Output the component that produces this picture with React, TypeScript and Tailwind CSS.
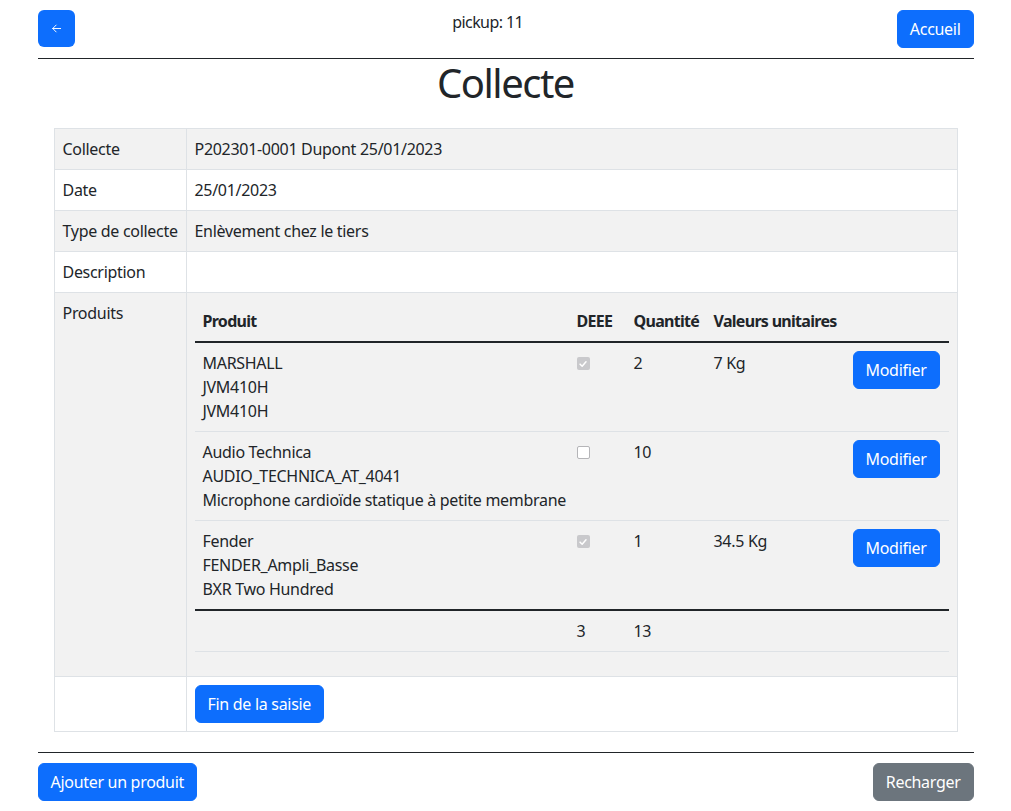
import React from 'react';

interface Product {
  brand: string;
  ref: string;
  name: string;
  deee: boolean;
  qty: number;
  unit: string;
}

const products: Product[] = [
  { brand: 'MARSHALL', ref: 'JVM410H', name: 'JVM410H', deee: true, qty: 2, unit: '7 Kg' },
  {
    brand: 'Audio Technica',
    ref: 'AUDIO_TECHNICA_AT_4041',
    name: 'Microphone cardioïde statique à petite membrane',
    deee: false,
    qty: 10,
    unit: '',
  },
  { brand: 'Fender', ref: 'FENDER_Ampli_Basse', name: 'BXR Two Hundred', deee: true, qty: 1, unit: '34.5 Kg' },
];

const btnPrimary =
  'rounded-[6px] border border-[#0d6efd] bg-[#0d6efd] px-3 py-[6px] text-base leading-6 text-white';

const Checkbox: React.FC<{ checked: boolean }> = ({ checked }) =>
  checked ? (
    <span className="mt-[6px] flex h-[13px] w-[13px] items-center justify-center rounded-[2px] bg-[#c9c9cc]">
      <svg viewBox="0 0 12 12" className="h-[10px] w-[10px]" fill="none" stroke="white" strokeWidth="1.8">
        <path d="M2.5 6.2 5 8.6 9.6 3.4" strokeLinecap="round" strokeLinejoin="round" />
      </svg>
    </span>
  ) : (
    <span className="mt-[6px] block h-[13px] w-[13px] rounded-[2px] border border-[#b5b5b8] bg-white" />
  );

const ProductsTable: React.FC = () => {
  const totalDeee = products.length;
  const totalQty = products.reduce((s, p) => s + p.qty, 0);
  const th = 'p-2 text-left font-bold tracking-[-0.7px] whitespace-nowrap';
  return (
    <table className="mb-4 w-full table-fixed border-collapse">
      <colgroup>
        <col className="w-[374px]" />
        <col className="w-[57px]" />
        <col className="w-[80px]" />
        <col className="w-[139px]" />
        <col />
      </colgroup>
      <thead>
        <tr className="border-b-2 border-[#212529]">
          <th className={th}>Produit</th>
          <th className={th}>DEEE</th>
          <th className={th}>Quantité</th>
          <th className={th}>Valeurs unitaires</th>
          <th className="p-2"></th>
        </tr>
      </thead>
      <tbody>
        {products.map((p, i) => (
          <tr
            key={p.ref}
            className={i === products.length - 1 ? 'border-b-2 border-[#212529]' : 'border-b border-[#dee2e6]'}
          >
            <td className="p-2 align-top whitespace-nowrap">
              <div>{p.brand}</div>
              <div>{p.ref}</div>
              <div>{p.name}</div>
            </td>
            <td className="p-2 align-top">
              <Checkbox checked={p.deee} />
            </td>
            <td className="p-2 align-top">{p.qty}</td>
            <td className="p-2 align-top">{p.unit}</td>
            <td className="p-2 align-top">
              <button className={btnPrimary}>Modifier</button>
            </td>
          </tr>
        ))}
      </tbody>
      <tfoot>
        <tr className="border-b border-[#dee2e6]">
          <td className="p-2"></td>
          <td className="p-2">{totalDeee}</td>
          <td className="p-2">{totalQty}</td>
          <td className="p-2"></td>
          <td className="p-2"></td>
        </tr>
      </tfoot>
    </table>
  );
};

export default function App() {
  const cell = 'border border-[#dee2e6] p-2 align-top';
  return (
    <div className="min-h-screen bg-white font-['Noto_Sans',sans-serif] text-base leading-6 tracking-[-0.3px] text-[#212529]">
      <div className="mx-auto w-[960px] px-3 pt-[10px] pb-[10px]">
        <div className="flex items-start justify-between">
          <button className="flex h-[37px] w-[37px] items-center justify-center rounded-[6px] bg-[#0d6efd]">
            <svg viewBox="0 0 16 16" className="h-[11px] w-[11px]" fill="none" stroke="white" strokeWidth="1.4">
              <path d="M14 8H2.5M7.5 3 2.5 8l5 5" strokeLinecap="round" strokeLinejoin="round" />
            </svg>
          </button>
          <div className="pl-[4px] tracking-[-0.6px]">pickup: 11</div>
          <button className={btnPrimary}>Accueil</button>
        </div>
        <hr className="mt-[10px] border-t border-[#212529]" />
        <h1 className="text-center text-[40px] leading-[48px] font-normal tracking-[-1.5px]">Collecte</h1>
        <div className="mx-4 mt-[21px]">
          <table className="w-full table-fixed border-collapse">
            <colgroup>
              <col className="w-[132px]" />
              <col />
            </colgroup>
            <tbody>
              <tr className="bg-[#f2f2f2]">
                <td className={cell}>Collecte</td>
                <td className={cell}>P202301-0001 Dupont 25/01/2023</td>
              </tr>
              <tr>
                <td className={cell}>Date</td>
                <td className={cell}>25/01/2023</td>
              </tr>
              <tr className="bg-[#f2f2f2]">
                <td className={`${cell} whitespace-nowrap`}>Type de collecte</td>
                <td className={cell}>Enlèvement chez le tiers</td>
              </tr>
              <tr>
                <td className={cell}>Description</td>
                <td className={cell}></td>
              </tr>
              <tr className="bg-[#f2f2f2]">
                <td className={cell}>Produits</td>
                <td className={cell}>
                  <ProductsTable />
                </td>
              </tr>
              <tr>
                <td className={cell}></td>
                <td className={cell}>
                  <button className={btnPrimary}>Fin de la saisie</button>
                </td>
              </tr>
            </tbody>
          </table>
        </div>
        <hr className="mt-[20px] border-t border-[#212529]" />
        <div className="mt-[10px] flex items-center justify-between">
          <button className={btnPrimary}>Ajouter un produit</button>
          <button className="rounded-[6px] border border-[#6c757d] bg-[#6c757d] px-3 py-[6px] text-base leading-6 text-white">
            Recharger
          </button>
        </div>
      </div>
    </div>
  );
}
